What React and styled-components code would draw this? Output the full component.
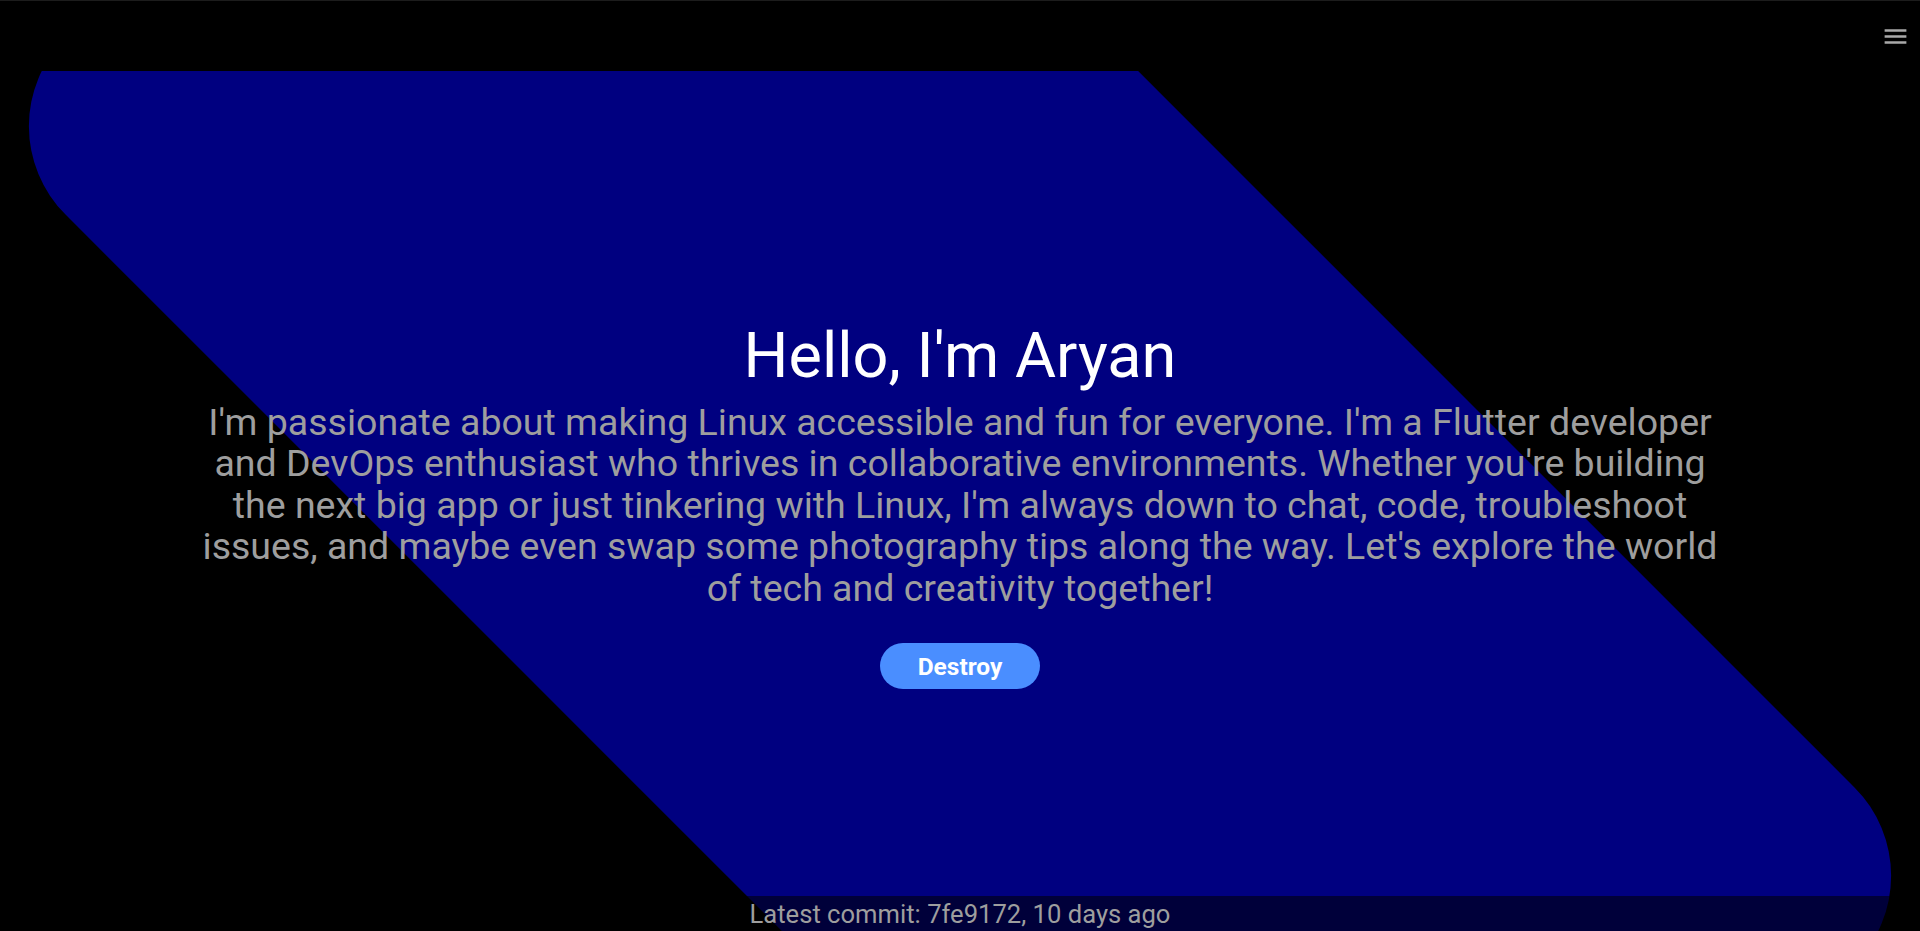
import React from "react";
import styled, { createGlobalStyle } from "styled-components";

const GlobalStyle = createGlobalStyle`
  * { box-sizing: border-box; }
  html, body {
    margin: 0;
    padding: 0;
    background: #000;
    font-family: Roboto, "Noto Sans", "Liberation Sans", sans-serif;
  }
`;

const Page = styled.div`
  min-height: 100vh;
  display: flex;
  flex-direction: column;
  background: #000;
`;

const Header = styled.header`
  height: 71px;
  flex: none;
  display: flex;
  align-items: center;
  justify-content: flex-end;
  padding-right: 10px;
  border-top: 1px solid #1c1c1c;
  background: #000;
`;

const MenuButton = styled.button`
  display: flex;
  padding: 0;
  border: 0;
  background: transparent;
  color: #a9a9a9;
  cursor: pointer;
  svg { width: 29px; height: 29px; display: block; }
`;

const Hero = styled.section`
  position: relative;
  height: calc(100vh - 71px);
  overflow: hidden;
  display: flex;
  flex-direction: column;
  align-items: center;
  justify-content: center;
`;

const Backdrop = styled.div`
  position: absolute;
  inset: 0;
  background: #000080;
  border-radius: 125px;
  transform: rotate(45deg);
  z-index: 0;
`;

const Content = styled.div`
  position: relative;
  z-index: 1;
  width: 1536px;
  max-width: 80%;
  padding-top: 6px;
  display: flex;
  flex-direction: column;
  align-items: center;
  text-align: center;
`;

const Title = styled.h1`
  margin: 0;
  font-size: 63px;
  font-weight: 400;
  line-height: normal;
  color: #ffffff;
`;

const Intro = styled.p`
  margin: 10px 0 0;
  font-size: 37.5px;
  line-height: 41.6px;
  color: #9e9e9e;
`;

const DestroyButton = styled.button`
  margin-top: 34px;
  width: 160px;
  height: 46px;
  border: 0;
  border-radius: 23px;
  background: #4a8eff;
  color: #ffffff;
  font-family: inherit;
  font-size: 24.5px;
  font-weight: 700;
  cursor: pointer;
`;

const Footer = styled.footer`
  position: absolute;
  left: 0;
  right: 0;
  bottom: 0;
  z-index: 1;
  height: 35px;
  display: flex;
  align-items: center;
  justify-content: center;
  background: rgba(0, 0, 0, 0.55);
  color: #9e9e9e;
  font-size: 25.6px;
`;

const MenuIcon = () => (
  <svg viewBox="0 0 24 24" fill="currentColor" aria-hidden="true">
    <path d="M3 18h18v-2H3v2zm0-5h18v-2H3v2zm0-7v2h18V6H3z" />
  </svg>
);

export default function App() {
  return (
    <>
      <GlobalStyle />
      <Page>
        <Header>
          <MenuButton aria-label="Menu">
            <MenuIcon />
          </MenuButton>
        </Header>
        <Hero>
          <Backdrop />
          <Content>
            <Title>Hello, I'm Aryan</Title>
            <Intro>
              I'm passionate about making Linux accessible and fun for everyone. I'm a Flutter
              developer and DevOps enthusiast who thrives in collaborative environments. Whether
              you're building the next big app or just tinkering with Linux, I'm always down to
              chat, code, troubleshoot issues, and maybe even swap some photography tips along the
              way. Let's explore the world of tech and creativity together!
            </Intro>
            <DestroyButton>Destroy</DestroyButton>
          </Content>
          <Footer>Latest commit: 7fe9172, 10 days ago</Footer>
        </Hero>
      </Page>
    </>
  );
}
